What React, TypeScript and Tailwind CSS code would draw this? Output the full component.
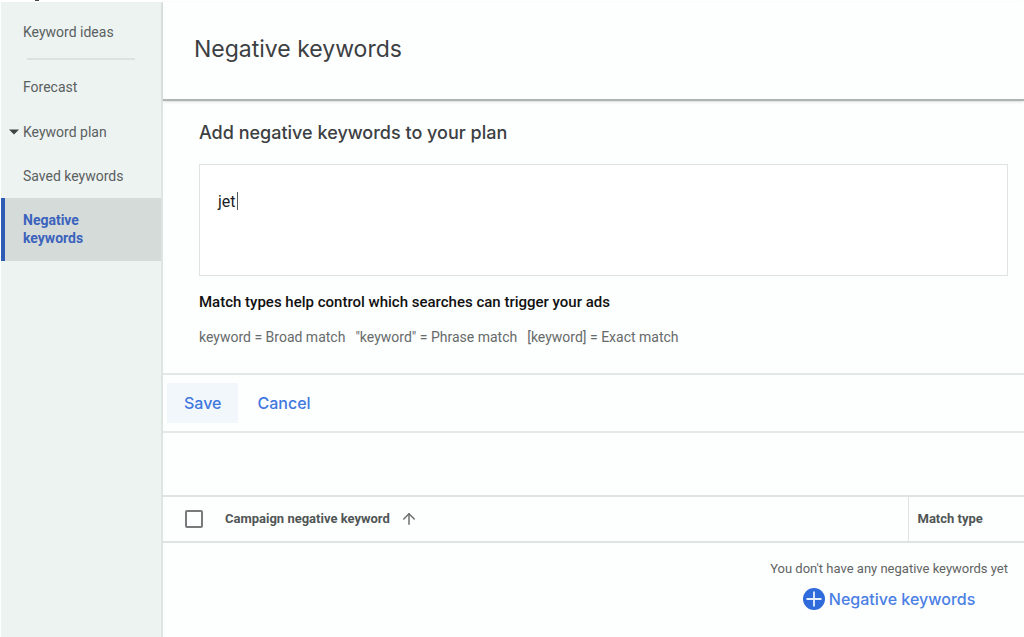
import { ArrowUp } from 'lucide-react';

const HEADING = "font-['Inter',sans-serif]";

export default function App() {
  return (
    <div className="flex flex-col min-h-screen bg-[#fdfefe] font-['Roboto',sans-serif] text-[#3c4043]">
      <div className="h-[2px] bg-white pl-[35px]">
        <div className="w-1 h-px bg-[#444]" />
      </div>
      <div className="flex flex-1">
        <Sidebar />
        <main className="flex-1 min-w-0">
          <header className="flex items-center h-[99px] px-[31px] pb-1 border-b-2 border-[#aeb4b3] shadow">
            <h1 className={`text-[23px] leading-8 ${HEADING}`}>
              Negative keywords
            </h1>
          </header>
          <KeywordForm />
          <div className="h-[62px]" />
          <KeywordTable />
        </main>
      </div>
    </div>
  );
}

function Sidebar() {
  return (
    <nav className="w-[162px] shrink-0 ml-px bg-[#edf3f1] border-r-2 border-[#dde5e3] text-[14px] leading-[18px] text-[#5a605f]">
      <a className="block pt-[21px] pb-[17px] pl-[22px]" href="#ideas">
        Keyword ideas
      </a>
      <hr className="mx-[26px] border-t-2 border-[#dce2e0]" />
      <a className="block pt-[18px] pb-[14px] pl-[22px]" href="#forecast">
        Forecast
      </a>
      <a className="flex items-center py-[13px] pl-2" href="#plan">
        <svg className="w-[10px] h-[6px] mr-1" viewBox="0 0 10 6">
          <path d="M0 0.5h10L5 5.5z" fill="#3c4542" />
        </svg>
        Keyword plan
      </a>
      <a className="block py-[13px] pl-[22px]" href="#saved">
        Saved keywords
      </a>
      <a
        aria-current="page"
        className="block pt-[13px] pb-[14px] pl-[18px] pr-12 font-bold border-l-4 border-[#2f5bb7] bg-[#d5dbd9] text-[#3b63bd]"
        href="#negative"
      >
        Negative keywords
      </a>
    </nav>
  );
}

function KeywordForm() {
  return (
    <form onSubmit={(e) => e.preventDefault()}>
      <div className="pt-5 pb-[26px] pl-9 pr-4">
        <label
          className={`block text-[18px] leading-6 font-medium ${HEADING}`}
          htmlFor="keywords"
        >
          Add negative keywords to your plan
        </label>
        <div className="relative mt-[19px]">
          <textarea
            className="block w-full h-[112px] px-[18px] py-[26px] text-[16px] leading-[22px] text-[#202124] bg-white border border-[#dfe3e2] resize-none outline-none caret-transparent"
            defaultValue="jet"
            id="keywords"
          />
          <span className="absolute w-px h-[18px] bg-[#55595a] left-[38px] top-[28px]" />
        </div>
        <p className="mt-4 text-[15px] leading-5 font-medium text-[#111]">
          Match types help control which searches can trigger your ads
        </p>
        <p className="flex gap-[10px] mt-[15px] text-[14px] leading-5 text-[#666b6a]">
          <span>keyword = Broad match</span>
          <span>"keyword" = Phrase match</span>
          <span>[keyword] = Exact match</span>
        </p>
      </div>
      <div
        className={`flex items-center gap-[2px] h-[60px] px-1 border-y-2 border-[#e3e9e8] text-[16px] font-medium text-[#3f78de] ${HEADING}`}
      >
        <button className="h-10 px-[17px] bg-[#f2f7fc]" type="submit">
          Save
        </button>
        <button className="h-10 px-[17px]" type="button">
          Cancel
        </button>
      </div>
    </form>
  );
}

function KeywordTable() {
  return (
    <table className="w-full text-left border-collapse">
      <thead className="text-[13px] leading-5 text-[#505655]">
        <tr className="h-[46px] border-y-2 border-[#dde4e2]">
          <th className="w-[62px] pl-[22px]">
            <input
              aria-label="Select all keywords"
              className="block w-[18px] h-[18px] border-2 border-[#777b7b] rounded-[2px] appearance-none"
              type="checkbox"
            />
          </th>
          <th className="font-bold">
            <span className="flex items-center gap-[10px]">
              Campaign negative keyword
              <ArrowUp className="text-[#6a6f6e]" size={18} strokeWidth={2} />
            </span>
          </th>
          <th className="w-[116px] pl-[9px] font-bold border-l border-[#dde4e2]">
            Match type
          </th>
        </tr>
      </thead>
      <tbody>
        <tr>
          <td className="pt-4 pr-4" colSpan={3}>
            <div className="flex flex-col items-center ml-auto w-fit">
              <p className="text-[13px] leading-5 text-[#5f6463]">
                You don't have any negative keywords yet
              </p>
              <button
                className={`flex items-center gap-1 mt-2 text-[16px] leading-6 font-medium text-[#4a80e4] ${HEADING}`}
                type="button"
              >
                <svg className="w-[22px] h-[22px]" viewBox="0 0 22 22">
                  <circle cx="11" cy="11" fill="#2f6bda" r="11" />
                  <path d="M11 3.5v15M3.5 11h15" stroke="#e8f0fd" strokeWidth="1.8" />
                </svg>
                Negative keywords
              </button>
            </div>
          </td>
        </tr>
      </tbody>
    </table>
  );
}
